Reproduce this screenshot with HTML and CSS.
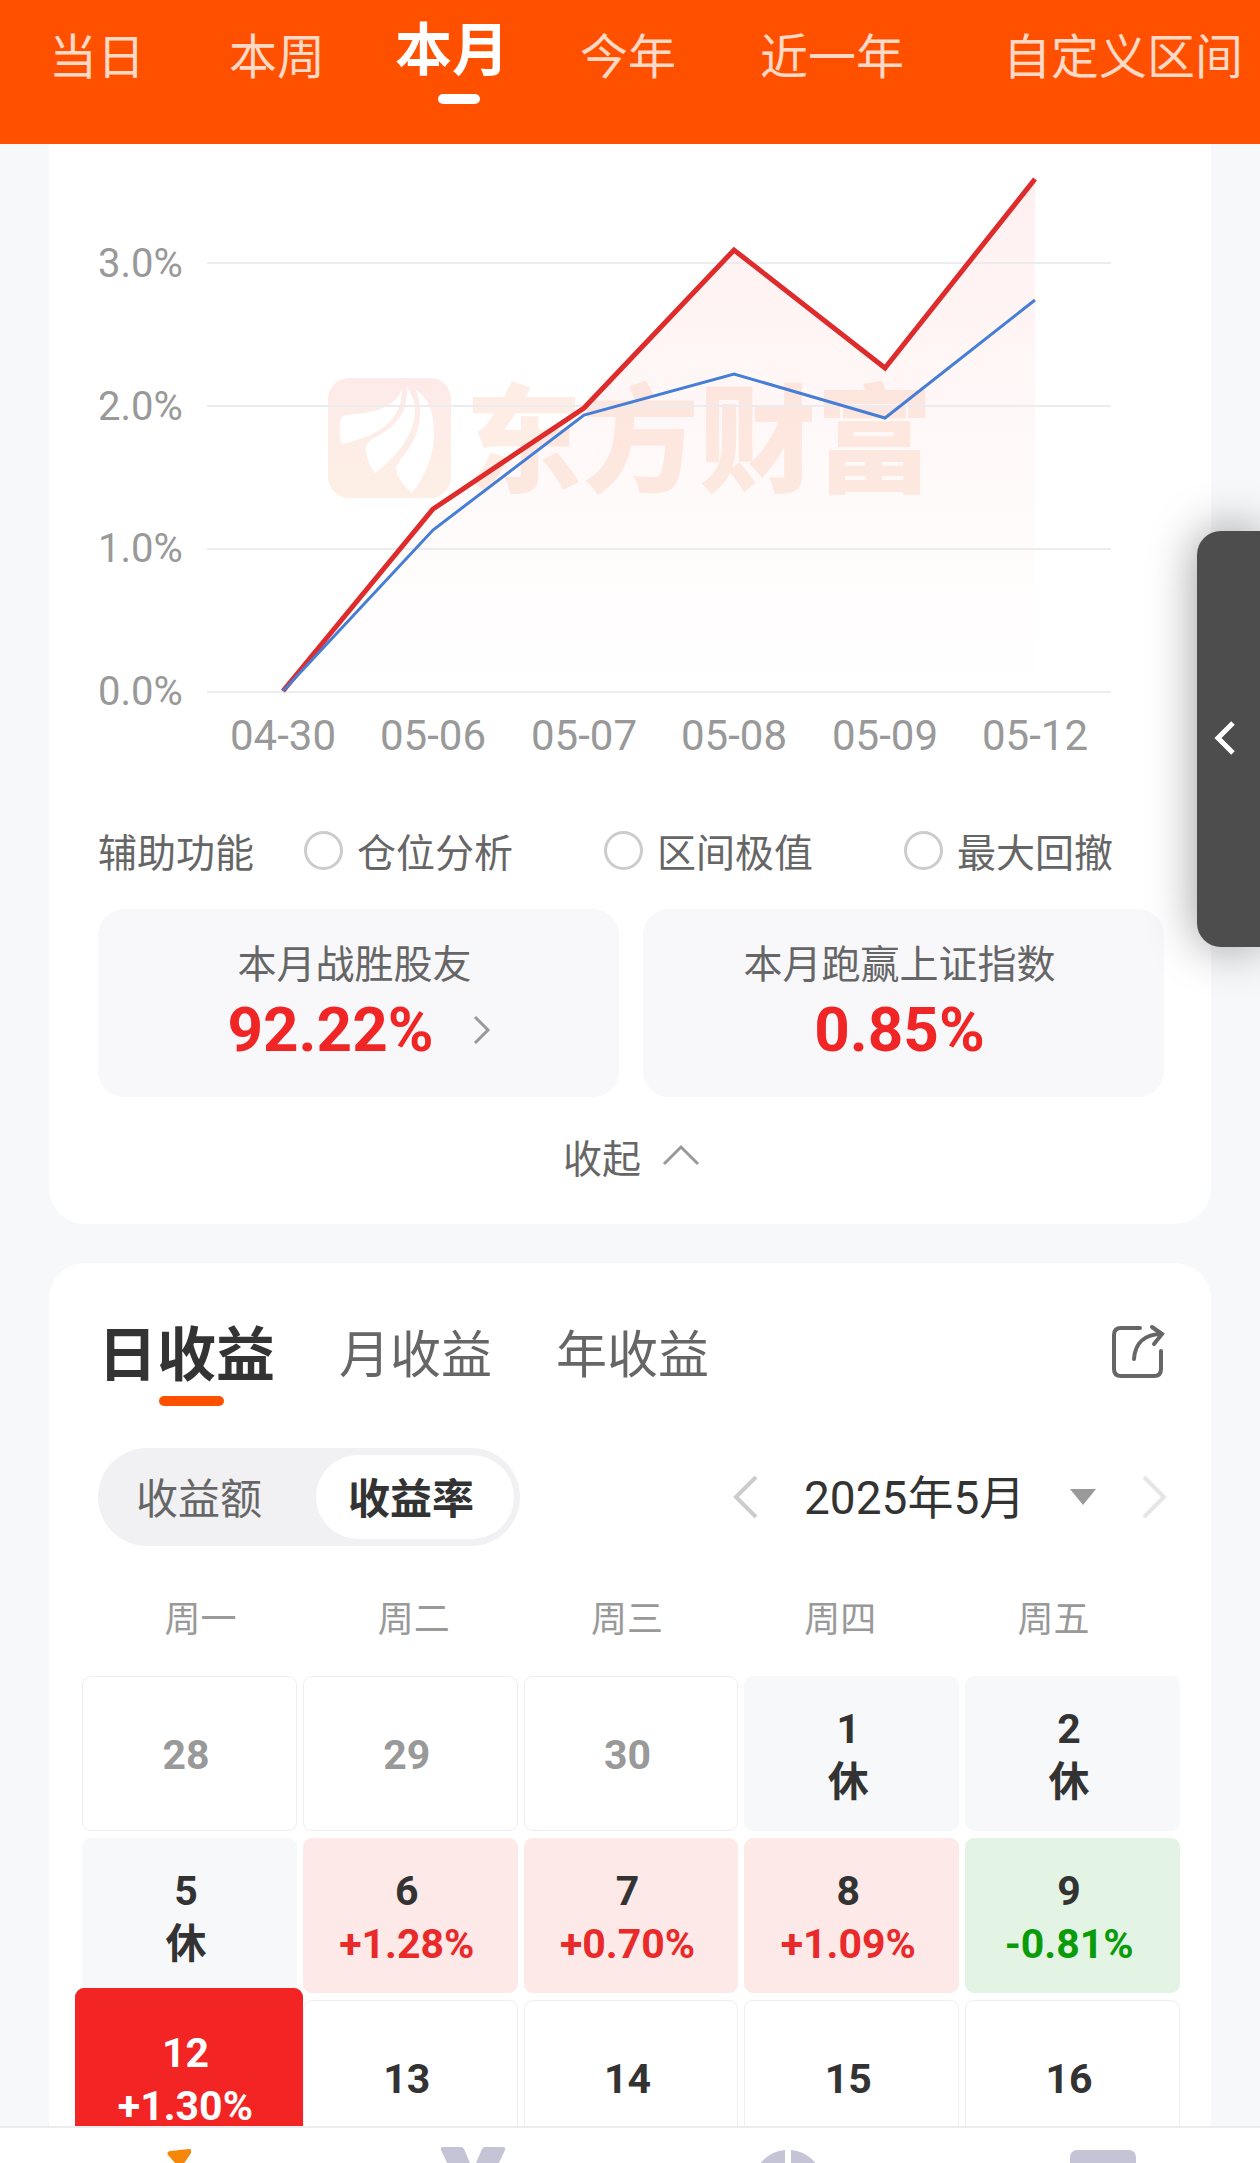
FILE: index.html
```html
<!DOCTYPE html>
<html lang="zh-CN">

<head>
	<meta charset="UTF-8">
	<meta name="viewport" content="width=device-width, initial-scale=1">
	<title>收益日历</title>
	<link rel="stylesheet" href="styles.css">
</head>

<body>
	<!-- 区间切换 -->
	<nav class="range">
		<a href="#">当日</a>
		<a href="#">本周</a>
		<a href="#" class="active">本月</a>
		<a href="#">今年</a>
		<a href="#">近一年</a>
		<a href="#" class="custom">自定义区间</a>
	</nav>

	<main class="main">
		<section class="card trend">
			<!-- 收益走势 -->
			<svg class="chart" viewBox="49 144 1162 656">
				<defs>
					<linearGradient id="area" x1="0" y1="0" x2="0" y2="1">
						<stop offset="0" stop-color="#f22" stop-opacity=".07" />
						<stop offset=".5" stop-color="#f22" stop-opacity=".03" />
						<stop offset="1" stop-color="#f22" stop-opacity="0" />
					</linearGradient>
					<linearGradient id="mark" x1="0" y1="0" x2="0" y2="1">
						<stop offset="0" stop-color="#fdeae9" />
						<stop offset="1" stop-color="#fdefe5" />
					</linearGradient>
				</defs>
				<rect x="328" y="378" width="123" height="120" rx="21" fill="url(#mark)" />
				<g fill="#fff">
					<path d="M402 389C396 405 380 413 346 415Q341 416 340 422Q339 432 341 444C380 436 402 420 402 389Z" />
					<path d="M407 387C408 415 396 426 371 440Q365 444 366 450C367 460 370 466 375 473C396 457 416 435 415 407Q413 396 407 387Z" />
					<path d="M416 390C429 399 434 412 434 434C434 456 424 478 412 493C405 487 397 478 396 469C398 456 420 446 420 412Q420 401 416 390Z" />
				</g>
				<text class="brand" x="465" y="483">东方财富</text>
				<path fill="url(#area)" d="M283 691L433 509L584 408L734 250L885 368L1035 179V691Z" />
				<path class="grid" d="M207 263H1111M207 406H1111M207 549H1111M207 692H1111" />
				<g class="axis">
					<text x="98" y="277">3.0%</text>
					<text x="98" y="420">2.0%</text>
					<text x="98" y="562">1.0%</text>
					<text x="98" y="705">0.0%</text>
				</g>
				<g class="axis date">
					<text x="283" y="750">04-30</text>
					<text x="433" y="750">05-06</text>
					<text x="584" y="750">05-07</text>
					<text x="734" y="750">05-08</text>
					<text x="885" y="750">05-09</text>
					<text x="1035" y="750">05-12</text>
				</g>
				<polyline class="mine" points="283,691 433,509 584,408 734,250 885,368 1035,179" />
				<polyline class="index" points="283,691 433,530 584,415 734,374 885,418 1035,300" />
			</svg>

			<div class="assist">
				<span>辅助功能</span>
				<label><input type="radio" name="assist">仓位分析</label>
				<label><input type="radio" name="assist">区间极值</label>
				<label><input type="radio" name="assist">最大回撤</label>
			</div>

			<div class="stats">
				<a href="#" class="stat">
					<span>本月战胜股友</span>
					<strong>92.22%<svg width="20" height="30" viewBox="0 0 20 30"><path d="M3 2L16 15L3 28" /></svg></strong>
				</a>
				<div class="stat">
					<span>本月跑赢上证指数</span>
					<strong>0.85%</strong>
				</div>
			</div>

			<button type="button" class="fold">收起
				<svg width="40" height="24" viewBox="0 0 40 24"><path d="M3 20L20 3L37 20" /></svg>
			</button>
		</section>

		<section class="card profit">
			<div class="head">
				<a href="#" class="active">日收益</a>
				<a href="#">月收益</a>
				<a href="#">年收益</a>
				<button type="button" class="share" aria-label="分享">
					<svg width="56" height="56" viewBox="0 0 56 56">
						<path d="M29 4H10Q3 4 3 11V45Q3 52 10 52H43Q50 52 50 45V27" />
						<path d="M23 35C24 19 34 10 51 10M41 3L51 10L43 20" />
					</svg>
				</button>
			</div>

			<div class="tools">
				<div class="switch">
					<button type="button">收益额</button>
					<button type="button" class="on">收益率</button>
				</div>
				<div class="month">
					<button type="button" aria-label="上个月">
						<svg width="28" height="44" viewBox="0 0 28 44"><path d="M24 2L4 22L24 42" /></svg>
					</button>
					<select aria-label="月份">
						<option>2025年5月</option>
					</select>
					<svg class="caret" width="26" height="16" viewBox="0 0 26 16"><path d="M0 0H26L13 16Z" /></svg>
					<button type="button" class="off" aria-label="下个月">
						<svg width="28" height="44" viewBox="0 0 28 44"><path d="M4 2L24 22L4 42" /></svg>
					</button>
				</div>
			</div>

			<table class="calendar">
				<thead>
					<tr>
						<th>周一</th>
						<th>周二</th>
						<th>周三</th>
						<th>周四</th>
						<th>周五</th>
					</tr>
				</thead>
				<tbody>
					<tr>
						<td class="prev">28</td>
						<td class="prev">29</td>
						<td class="prev">30</td>
						<td class="rest">1<span>休</span></td>
						<td class="rest">2<span>休</span></td>
					</tr>
					<tr>
						<td class="rest">5<span>休</span></td>
						<td class="up">6<span>+1.28%</span></td>
						<td class="up">7<span>+0.70%</span></td>
						<td class="up">8<span>+1.09%</span></td>
						<td class="down">9<span>-0.81%</span></td>
					</tr>
					<tr>
						<td class="today">12<span>+1.30%</span></td>
						<td>13</td>
						<td>14</td>
						<td>15</td>
						<td>16</td>
					</tr>
				</tbody>
			</table>
		</section>
	</main>

	<!-- 底部导航 -->
	<nav class="bottom">
		<a href="#" aria-label="收益">
			<svg width="66" height="66" viewBox="0 0 66 66"><path fill="#f5870a" d="M43 8Q41 5 45 4L64 2Q69 2 66 6L54 24H62L30 60L38 34H54L50 16Z" /></svg>
		</a>
		<a href="#" aria-label="排行">
			<svg width="66" height="66" viewBox="0 0 66 66"><path fill="#c5c3d6" d="M3 0H21Q23 0 24 2L30 16H36L42 2Q43 0 45 0H63Q66 0 65 3L56 22H10L1 3Q0 0 3 0Z" /></svg>
		</a>
		<a href="#" aria-label="分析">
			<svg width="66" height="66" viewBox="0 0 66 66"><path fill="#c5c3d6" d="M30 3V33H0A33 30 0 0 1 30 3ZM36 3A33 30 0 0 1 66 33H36Z" /></svg>
		</a>
		<a href="#" aria-label="账单">
			<svg width="66" height="66" viewBox="0 0 66 66"><rect y="3" width="66" height="60" rx="7" fill="#c5c3d6" /></svg>
		</a>
	</nav>

	<!-- 侧边抽屉把手 -->
	<button type="button" class="drawer" aria-label="展开">
		<svg width="26" height="38" viewBox="0 0 26 38"><path d="M21 3L6 18L21 33" /></svg>
	</button>
</body>

</html>
```

FILE: styles.css
```css
* {
	margin: 0;
	padding: 0;
	box-sizing: border-box;
}

body {
	height: 100vh;
	display: flex;
	flex-direction: column;
	overflow: hidden;
	font-family: Roboto, "Noto Sans CJK SC", sans-serif;
	font-size: 39px;
	color: #666;
	background: #f7f8fa;
}

a {
	color: inherit;
	text-decoration: none;
}

button,
select {
	font: inherit;
	color: inherit;
	border: 0;
	background: none;
	cursor: pointer;
}

svg {
	display: block;
	flex: none;
	fill: none;
}

/* 区间切换 */
.range {
	flex: none;
	display: flex;
	height: 144px;
	padding-left: 7px;
	overflow: hidden;
	font-size: 48px;
	line-height: 72px;
	white-space: nowrap;
	color: #ffd9c5;
	background: #ff5000;
}
.range a {
	padding: 22px 42px 0;
}
.range .active {
	padding: 15px 29px 0 28px;
	font-size: 57px;
	font-weight: bold;
	color: #fff;
}
.range .custom {
	padding-left: 57px;
}
.range .active::after {
	content: "";
	display: block;
	width: 42px;
	height: 10px;
	margin: 7px 29px 0 auto;
	border-radius: 5px;
	background: #fff;
}

.main {
	flex: 1;
	min-height: 0;
	overflow: hidden;
}
.card {
	margin: 0 49px 39px;
	border-radius: 36px;
	background: #fff;
}

/* 走势图 */
.trend {
	padding-bottom: 38px;
	border-radius: 0 0 36px 36px;
}
.chart {
	width: 100%;
}
.chart .grid {
	stroke: #ececee;
	stroke-width: 2;
}
.chart .axis {
	font-size: 40px;
	fill: #999;
}
.chart .date {
	font-size: 42px;
	text-anchor: middle;
}
.chart .brand {
	font-size: 117px;
	font-weight: 900;
	fill: #fdede5;
}
.chart .mine {
	stroke: #de2b2b;
	stroke-width: 5;
}
.chart .index {
	stroke: #467ed6;
	stroke-width: 3;
}

.assist {
	display: flex;
	justify-content: flex-end;
	align-items: center;
	gap: 91px;
	height: 100px;
	padding: 0 98px 0 49px;
}
.assist span {
	margin-right: auto;
}
.assist span + label {
	margin-left: -91px;
}
.assist label {
	display: flex;
	align-items: center;
	gap: 14px;
}
.assist input {
	appearance: none;
	width: 39px;
	height: 39px;
	border: 3px solid #ccc;
	border-radius: 50%;
}

.stats {
	display: grid;
	grid-template-columns: 1fr 1fr;
	gap: 24px;
	margin: 9px 47px 0 49px;
}
.stat {
	height: 188px;
	padding: 26px 8px 0 0;
	text-align: center;
	line-height: 60px;
	border-radius: 26px;
	background: #f8f8fb;
}
.stat strong {
	display: flex;
	justify-content: center;
	align-items: center;
	gap: 38px;
	height: 70px;
	font-size: 62px;
	color: #f02626;
}
a.stat strong {
	padding-left: 10px;
}
.stat svg,
.fold svg {
	stroke: #999;
	stroke-width: 3;
}

.fold {
	display: flex;
	align-items: center;
	justify-content: center;
	gap: 20px;
	width: 100%;
	height: 60px;
	margin-top: 29px;
	padding-left: 4px;
}

/* 收益日历 */
.profit {
	padding: 47px 31px 0 33px;
}
.head {
	display: flex;
	align-items: flex-start;
	gap: 64px;
	padding: 0 13px 0 16px;
	font-size: 51px;
	line-height: 92px;
}
.head .active {
	font-size: 59px;
	font-weight: bold;
	color: #333;
}
.head .active::after {
	content: "";
	display: block;
	width: 65px;
	height: 10px;
	margin: -6px 51px 0 auto;
	border-radius: 5px;
	background: #ff5000;
}
.head .share {
	margin: 14px 0 0 auto;
	stroke: #666;
	stroke-width: 4;
	stroke-linecap: round;
}

.tools {
	display: flex;
	justify-content: space-between;
	align-items: center;
	margin-top: 42px;
	padding: 0 12px 0 16px;
}
.switch {
	display: flex;
	padding: 7px 6px;
	border-radius: 49px;
	background: #f1f1f4;
}
.switch button {
	height: 84px;
	padding: 0 40px 4px 32px;
	font-size: 42px;
	border-radius: 42px;
}
.switch button:first-child {
	padding-right: 54px;
}
.switch .on {
	font-weight: bold;
	color: #333;
	background: #fff;
}
.month {
	display: flex;
	align-items: center;
	stroke: #ccc;
	stroke-width: 4;
}
.month select {
	appearance: none;
	margin: 2px 44px 0 44px;
	font-size: 46px;
	color: #333;
}
.month .off {
	margin-left: 44px;
	stroke: #e6e6e6;
}
.month .caret {
	fill: #999;
	stroke: none;
}

.calendar {
	display: block;
	margin-top: 47px;
}
.calendar thead,
.calendar tbody {
	display: grid;
	row-gap: 7px;
}
.calendar tr {
	display: grid;
	grid-template-columns: repeat(5, 1fr);
	gap: 6px;
}
.calendar thead tr {
	gap: 0;
	padding: 0 20px 0 12px;
}
.calendar th {
	height: 83px;
	font-size: 36px;
	font-weight: normal;
	line-height: 54px;
	color: #999;
}
.calendar td {
	display: flex;
	flex-direction: column;
	justify-content: center;
	height: 155px;
	padding: 4px 7px 0 0;
	font-size: 41px;
	font-weight: bold;
	line-height: 53px;
	text-align: center;
	color: #333;
	border: 1px solid #eee;
	border-radius: 9px;
}
.calendar .prev {
	color: #999;
}
.calendar .rest {
	border-color: #f7f8fa;
	background: #f7f8fa;
}
.calendar .up {
	border-color: #fde9e8;
	background: #fde9e8;
}
.calendar .up span {
	color: #e92a2a;
}
.calendar .down {
	border-color: #e3f4e4;
	background: #e3f4e4;
}
.calendar .down span {
	color: #0a9b0a;
}
.calendar .today {
	height: 179px;
	margin: -12px -6px -12px -7px;
	color: #fff;
	border-color: #f32424;
	background: #f32424;
}

/* 底部导航 */
.bottom {
	flex: none;
	display: grid;
	grid-template-columns: repeat(4, 1fr);
	justify-items: center;
	height: 37px;
	padding-top: 19px;
	overflow: hidden;
	border-top: 2px solid #ececee;
	background: #fff;
}

.drawer {
	position: fixed;
	top: 531px;
	right: 0;
	width: 63px;
	height: 416px;
	padding-left: 15px;
	border-radius: 24px 0 0 24px;
	background: #4d4d4d;
	box-shadow: 0 0 48px rgba(0, 0, 0, .4);
	stroke: #fff;
	stroke-width: 5;
}
```
